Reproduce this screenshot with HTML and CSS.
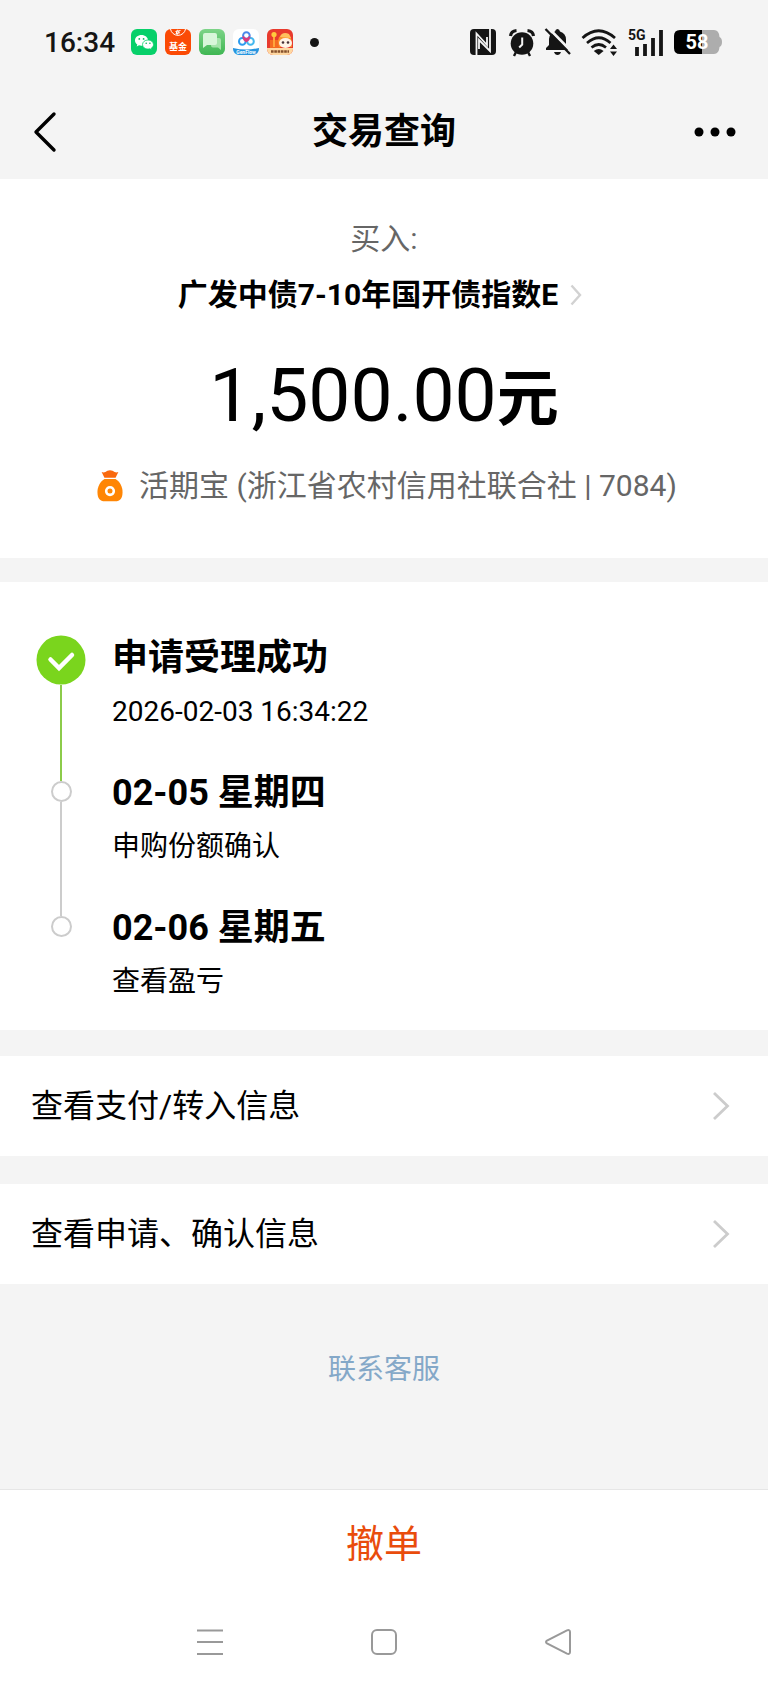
FILE: index.html
```html
<!DOCTYPE html>
<html lang="zh-CN">
<head>
<meta charset="utf-8">
<meta name="viewport" content="width=device-width, initial-scale=1">
<title>交易查询</title>
<link rel="stylesheet" href="styles.css">
</head>
<body>
<div class="status">
  <span class="time">16:34</span>
  <div class="apps">
    <svg width="26" height="26" viewBox="0 0 26 26" aria-hidden="true">
      <rect width="26" height="26" rx="6" fill="#07d06a"/>
      <path d="M10.500 6C6.900 6 4 8.400 4 11.400c0 1.700.9 3.100 2.300 4.100l-.6 2 2.300-1.200c.8.200 1.600.4 2.500.4 3.600 0 6.500-2.400 6.500-5.300S14.100 6 10.500 6z" fill="#fff"/>
      <path d="M17 11c-3.100 0-5.500 2-5.500 4.600s2.400 4.500 5.500 4.500c.7 0 1.400-.1 2-.3l1.900 1-.5-1.700c1.300-.8 2.100-2.100 2.100-3.500 0-2.600-2.400-4.600-5.500-4.600z" fill="#fff" stroke="#07d06a" stroke-width=".8"/>
      <g fill="#07b55c"><circle cx="8.300" cy="9.900" r=".9"/><circle cx="12.600" cy="9.900" r=".9"/><circle cx="15.200" cy="14.300" r=".8"/><circle cx="18.900" cy="14.300" r=".8"/></g>
    </svg>
    <svg width="26" height="26" viewBox="0 0 26 26" aria-hidden="true">
      <rect width="26" height="26" rx="6" fill="#fb4a05"/>
      <path d="M5.500 0a7.600 7.600 0 0 0 15 0" fill="none" stroke="#fff" stroke-width="1"/>
      <path d="M10.500 2.500l5-1M12.500.8l-1.500 4M14 2l-2 3.800M11 4.500l4-.8" stroke="#fff" stroke-width="1" fill="none"/>
      <text class="app-cn" x="13" y="20.500" text-anchor="middle">基金</text>
    </svg>
    <svg width="26" height="26" viewBox="0 0 26 26" aria-hidden="true">
      <defs><linearGradient id="g" x2="0" y2="1"><stop stop-color="#7dd488"/><stop offset="1" stop-color="#3fb653"/></linearGradient></defs>
      <rect width="26" height="26" rx="6" fill="url(#g)"/>
      <path d="M13 9h7a2 2 0 0 1 2 2v10l-3-2.500h-5a2 2 0 0 1-2-2z" fill="#a5e4ab"/>
      <path d="M6 4h10a2 2 0 0 1 2 2v8a2 2 0 0 1-2 2H8l-4 3V6a2 2 0 0 1 2-2z" fill="#d8f6da"/>
    </svg>
    <svg width="26" height="26" viewBox="0 0 26 26" aria-hidden="true">
      <rect width="26" height="26" rx="6" fill="#fff"/>
      <g fill="none" stroke-width="2"><circle cx="9.300" cy="12.400" r="3.300" stroke="#2c9cf0"/><circle cx="17.500" cy="12.400" r="3.300" stroke="#43b7ee"/><circle cx="13.400" cy="6.500" r="3.300" stroke="#4a87ea"/><path d="M10 7.500a3.500 3.500 0 0 0 6.700 0M10.600 10l2.700 2.200L16.200 10" stroke="#db3b7d"/></g>
      <path d="M0 19q13 3 26 0v1a6 6 0 0 1-6 6H6a6 6 0 0 1-6-6z" fill="#2795df"/>
      <text class="app-en" x="13" y="24.500" text-anchor="middle">GenFlow</text>
    </svg>
    <svg width="26" height="26" viewBox="0 0 26 26" aria-hidden="true">
      <rect width="26" height="26" rx="6" fill="#e83a2d"/>
      <path d="M3 11h10v10H3z" fill="#f46b22"/>
      <circle cx="7" cy="5.500" r="2.600" fill="#ffc83d"/><path d="M6 8h2v10H6z" fill="#ffa63c"/>
      <path d="M11 13c0-5 3-8 7.500-8 3 0 5.500 2.500 6 6l.5 7H12z" fill="#f9912d"/>
      <path d="M13 8c1-4 5-5 9-3l2 4z" fill="#ffc05d"/>
      <ellipse cx="18.500" cy="14" rx="6.500" ry="5" fill="#fff3e7"/>
      <circle cx="16" cy="13.500" r="1.300" fill="#463137"/><circle cx="21" cy="13.500" r="1.300" fill="#463137"/>
      <path d="M0 19h26v1a6 6 0 0 1-6 6H6a6 6 0 0 1-6-6z" fill="#ffd7a0"/>
      <path d="M4 22.500h18" stroke="#85502b" stroke-width="2.600" stroke-dasharray="2.600 .7"/>
    </svg>
  </div>
  <span class="more-dot"></span>
  <div class="signals">
    <svg width="29" height="26" viewBox="0 0 29 26" role="img" aria-label="NFC">
      <rect width="26" height="26" rx="4" fill="#151515"/>
      <path d="M6.500 26V4.500L17 16V8M20 0v22L9 11v9" fill="none" stroke="#f4f4f4" stroke-width="1.800"/>
    </svg>
    <svg width="26" height="27" viewBox="0 0 26 27" role="img" aria-label="闹钟">
      <path d="M1.500 7Q2 2 7.500 1.500M24.500 7Q24 2 18.500 1.500" fill="none" stroke="#151515" stroke-width="3.200"/>
      <circle cx="13" cy="14.500" r="11.300" fill="#151515"/><path d="M7 23l-2 4M19 23l2 4" stroke="#151515" stroke-width="2.400"/>
      <path d="M13.200 8.500v7l-3 3" fill="none" stroke="#f4f4f4" stroke-width="2"/>
    </svg>
    <svg width="26" height="26" viewBox="0 0 26 26" role="img" aria-label="静音">
      <path d="M1 21v-2l3-3V10q0-5.500 6-7.500Q10.500 0 12.500 0T15 2.500q6 2 6 8V16l3 3v2z" fill="#151515"/>
      <path d="M9 23h7q-1 3-3.500 3T9 23z" fill="#151515"/>
      <path d="M2.500-2L27 23" stroke="#f4f4f4" stroke-width="2.600"/><path d="M.5 0L25 25" stroke="#151515" stroke-width="2.300"/>
    </svg>
    <svg width="37" height="27" viewBox="0 0 37 27" role="img" aria-label="无线网络">
      <g fill="none" stroke="#151515" stroke-width="2.700"><path d="M1.500 9Q17.500-5.500 34 9M6 14q12-10.500 23.500 0M10.500 18.500q7.300-6 14.500 0"/></g>
      <path d="M12.800 22q5-4 9.800 0L17.700 26z" fill="#151515"/><path d="M29 20l3.500-4.500L36 20zM29 22.500h7L32.500 27z" fill="#151515"/>
    </svg>
    <svg width="36" height="27" viewBox="0 0 36 27" role="img" aria-label="移动信号">
      <text class="net" x="0" y="11">5G</text>
      <path d="M9 18v9M17 15v12M25 9v18M33 1v26" stroke="#151515" stroke-width="3.800"/>
    </svg>
    <svg width="48" height="26" viewBox="0 0 48 26" role="img" aria-label="电量 58%">
      <path d="M28 1h12q5 0 5.500 7 2.500 1 2.500 5t-2.500 5q-.5 7-5.500 7H28z" fill="#adadad"/>
      <path d="M6 1h22v24H6q-6 0-6-6V7q0-6 6-6z" fill="#000"/>
      <text class="battery" x="23" y="20" text-anchor="middle">58</text>
    </svg>
  </div>
</div>

<header class="bar">
  <button class="icon-btn" aria-label="返回"><svg width="26" height="42" viewBox="0 0 26 42"><path d="M22 3L4 21l18 18" fill="none" stroke="#000" stroke-width="3.400" stroke-linecap="round" stroke-linejoin="round"/></svg></button>
  <h1 class="bar-title">交易查询</h1>
  <button class="icon-btn icon-btn-end" aria-label="更多"><svg width="42" height="10" viewBox="0 0 42 10"><circle cx="5" cy="5" r="4.500"/><circle cx="21" cy="5" r="4.500"/><circle cx="37" cy="5" r="4.500"/></svg></button>
</header>

<main class="content">
  <section class="summary">
    <p class="kind">买入:</p>
    <a class="fund" href="#">广发中债7-10年国开债指数E
      <svg width="12" height="22" viewBox="0 0 12 22" aria-hidden="true"><path d="M1.500 1.500L10 11l-8.500 9.500" fill="none" stroke="#d2d2d2" stroke-width="2.400"/></svg>
    </a>
    <p class="amount">1,500.00<b class="unit">元</b></p>
    <p class="account">
      <svg width="26" height="32" viewBox="0 0 28 34" aria-hidden="true">
        <path d="M5 2q2 1 4 0 2-2 5-2t5 2q2 1 4 0l-3 6H8z" fill="#f9690e"/>
        <path d="M8 9.500h12c5 3 7.500 8.500 7.500 14 0 7-2.500 10-8 10h-11c-5.500 0-8-3-8-10 0-5.500 2.500-11 7.500-14z" fill="#ff8605"/>
        <circle cx="14" cy="22.500" r="4.100" fill="#ff8605" stroke="#fff" stroke-width="2.800"/>
      </svg>
      活期宝 (浙江省农村信用社联合社 | 7084)
    </p>
  </section>

  <ol class="timeline">
    <li class="step">
      <div class="rail rail-first">
        <svg width="50" height="50" viewBox="0 0 50 50" aria-hidden="true"><circle cx="25" cy="25" r="24.500" fill="#7ad51d"/><path d="M14.500 24.500l8.500 8.500 13-13" fill="none" stroke="#fff" stroke-width="4.500" stroke-linecap="round"/></svg>
        <span class="line line-done"></span>
      </div>
      <div><h2 class="step-title">申请受理成功</h2><p class="step-note">2026-02-03 16:34:22</p></div>
    </li>
    <li class="step">
      <div class="rail"><span class="lead line-done"></span><span class="node"></span><span class="line"></span></div>
      <div><h2 class="step-title">02-05 星期四</h2><p class="step-note">申购份额确认</p></div>
    </li>
    <li class="step step-last">
      <div class="rail"><span class="lead"></span><span class="node"></span></div>
      <div><h2 class="step-title">02-06 星期五</h2><p class="step-note">查看盈亏</p></div>
    </li>
  </ol>

  <nav class="links">
    <a class="link" href="#">查看支付/转入信息
      <svg width="18" height="30" viewBox="0 0 18 30" aria-hidden="true"><path d="M2 2l13.500 13L2 28" fill="none" stroke="#ccc" stroke-width="2.800"/></svg></a>
    <a class="link" href="#">查看申请、确认信息
      <svg width="18" height="30" viewBox="0 0 18 30" aria-hidden="true"><path d="M2 2l13.500 13L2 28" fill="none" stroke="#ccc" stroke-width="2.800"/></svg></a>
  </nav>
  <a class="service" href="#">联系客服</a>
</main>

<footer class="footer">
  <button class="cancel">撤单</button>
  <div class="keys">
    <button class="key" aria-label="最近任务"><svg width="28" height="28" viewBox="0 0 28 28"><path d="M1 2.500h26M1 14h26M1 26h26" stroke="#999" stroke-width="2"/></svg></button>
    <button class="key" aria-label="主页"><svg width="28" height="28" viewBox="0 0 28 28"><rect x="2" y="2" width="24" height="24" rx="5" fill="none" stroke="#999" stroke-width="2"/></svg></button>
    <button class="key" aria-label="后退"><svg width="28" height="28" viewBox="0 0 28 28"><path d="M23 2.400L3 12.500q-2 1.500 0 3L23 25.600q3 1 3-1.600V4q0-2.600-3-1.600z" fill="none" stroke="#999" stroke-width="2"/></svg></button>
  </div>
</footer>
</body>
</html>
```
FILE: styles.css
```css
* {
  box-sizing: border-box;
}

body {
  margin: 0;
  min-height: 100vh;
  display: flex;
  flex-direction: column;
  background: #f4f4f4;
  color: #000;
  font-family: Roboto, "Noto Sans CJK SC", sans-serif;
}

h1, h2, p, ol {
  margin: 0;
  padding: 0;
}

a {
  color: inherit;
  text-decoration: none;
}

button {
  border: 0;
  padding: 0;
  background: none;
  color: inherit;
  font: inherit;
  cursor: pointer;
}

svg {
  display: block;
  flex: none;
}

.status {
  display: flex;
  align-items: center;
  height: 84px;
  padding: 0 46px 0 44px;
}

.time {
  font-size: 28px;
  font-weight: 500;
  color: #151515;
}

.apps {
  display: flex;
  gap: 8px;
  margin-left: 16px;
}

.app-cn {
  font-size: 9px;
  font-weight: 700;
  fill: #fff;
}

.app-en {
  font-size: 5px;
  font-weight: 700;
  fill: #fff;
}

.more-dot {
  width: 9px;
  height: 9px;
  margin-left: 17px;
  border-radius: 50%;
  background: #151515;
}

.signals {
  display: flex;
  align-items: center;
  gap: 10px;
  margin-left: auto;
}

.signals svg {
  overflow: visible;
}

.net {
  font-size: 14px;
  font-weight: 700;
  fill: #151515;
}

.battery {
  font-size: 20px;
  font-weight: 700;
  fill: #fff;
}

.bar {
  display: grid;
  grid-template-columns: 1fr auto 1fr;
  align-items: center;
  height: 95px;
  padding: 0 32px;
}

.icon-btn {
  justify-self: start;
}

.icon-btn-end {
  justify-self: end;
}

.bar-title {
  font-size: 36px;
  line-height: 48px;
  font-weight: 700;
}

.content {
  flex: 1;
  display: flex;
  flex-direction: column;
}

.summary {
  display: flex;
  flex-direction: column;
  align-items: center;
  padding: 40px 24px 52px;
  background: #fff;
}

.kind {
  font-size: 30px;
  line-height: 40px;
  color: #666;
}

.fund {
  display: flex;
  align-items: center;
  gap: 12px;
  margin-top: 16px;
  padding-right: 8px;
  font-size: 30px;
  line-height: 40px;
  font-weight: 700;
}

.amount {
  margin-top: 32px;
  font-size: 75px;
  line-height: 96px;
}

.unit {
  font-size: 62px;
}

.account {
  display: flex;
  align-items: center;
  gap: 16px;
  margin-top: 18px;
  padding-left: 6px;
  font-size: 30px;
  line-height: 40px;
  color: #666;
}

.timeline {
  margin-top: 24px;
  padding: 52px 36px 30px;
  list-style: none;
  background: #fff;
}

.step {
  display: flex;
  gap: 26px;
  min-height: 135px;
}

.step-last {
  min-height: 0;
}

.rail {
  display: flex;
  flex: none;
  flex-direction: column;
  align-items: center;
  width: 50px;
}

.rail-first {
  padding-top: 1px;
}

.lead {
  width: 2px;
  height: 12px;
  background: #ccc;
}

.line {
  flex: 1;
  width: 2px;
  background: #ccc;
}

.line-done {
  background: #8ccb4a;
}

.node {
  width: 21px;
  height: 21px;
  border: 2px solid #ccc;
  border-radius: 50%;
}

.step-title {
  font-size: 36px;
  line-height: 48px;
  font-weight: 700;
}

.step-note {
  margin-top: 12px;
  font-size: 28px;
  line-height: 36px;
}

.links {
  display: flex;
  flex-direction: column;
  gap: 28px;
  margin-top: 26px;
}

.link {
  display: flex;
  align-items: center;
  justify-content: space-between;
  padding: 26px 38px 26px 31px;
  background: #fff;
  font-size: 32px;
  line-height: 48px;
}

.service {
  align-self: center;
  margin: 66px 0 48px;
  font-size: 28px;
  line-height: 40px;
  color: #84a8c8;
}

.footer {
  display: flex;
  flex-direction: column;
  border-top: 1px solid #e6e6e6;
  background: #fff;
}

.cancel {
  height: 100px;
  font-size: 38px;
  color: #e94c0c;
}

.keys {
  display: flex;
  justify-content: center;
  gap: 146px;
  padding: 36px 0 32px;
}

.key {
  display: grid;
  place-items: center;
  height: 32px;
}
```
